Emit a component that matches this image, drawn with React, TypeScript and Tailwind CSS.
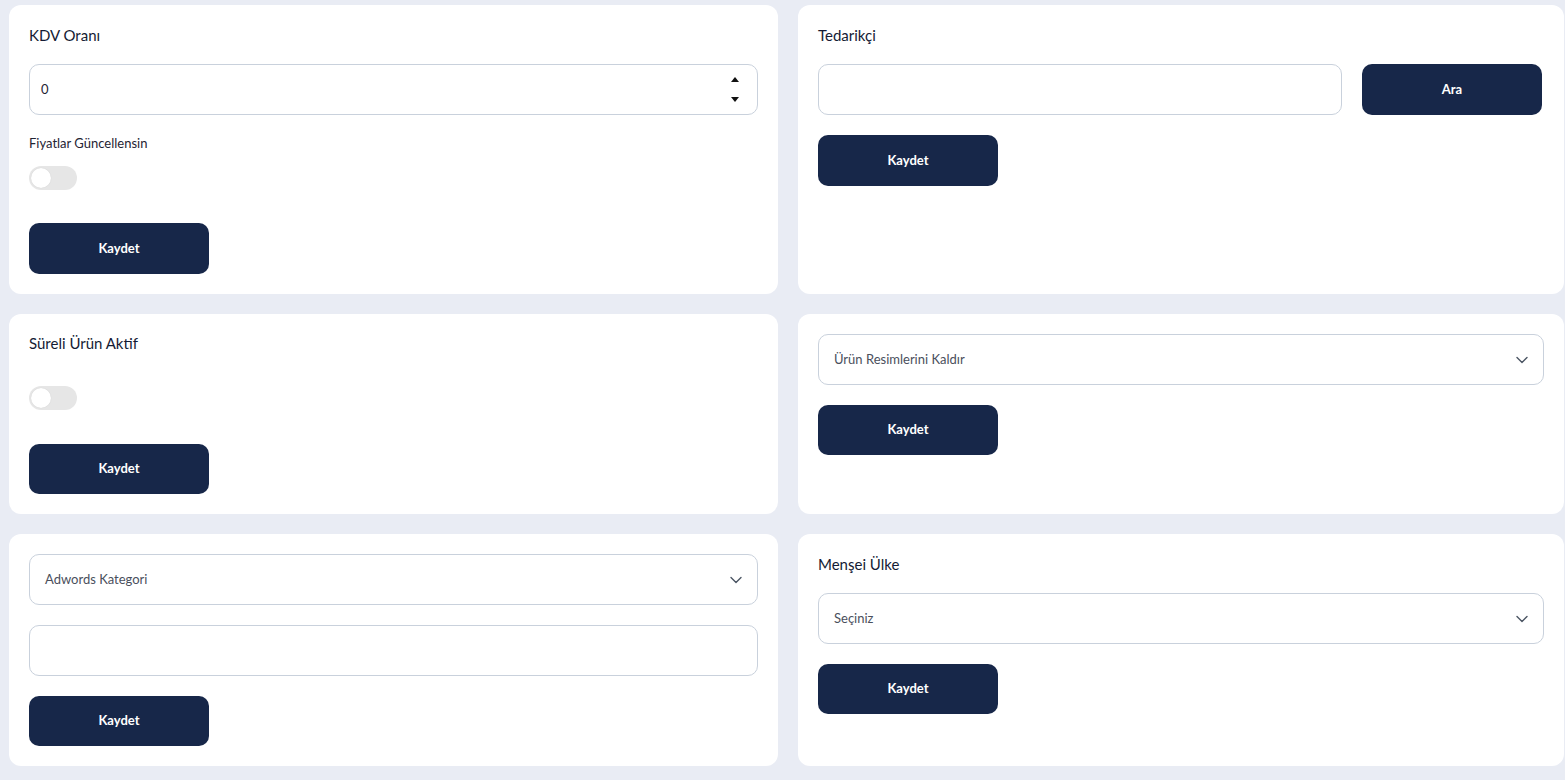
import React from "react";

const font = { fontFamily: "Lato, 'Noto Sans', sans-serif" };

function Card({ children }: { children: React.ReactNode }) {
  return <div className="bg-white rounded-[12px] px-[20px] pt-[20px] pb-[20px]">{children}</div>;
}

function Title({ children }: { children: React.ReactNode }) {
  return <div className="h-[20px] leading-[20px] text-[15px] text-[#141b34] mb-[19px]">{children}</div>;
}

function Button({ label, className = "" }: { label: string; className?: string }) {
  return (
    <button className={"w-[180px] rounded-[10px] bg-[#172749] text-white text-[13px] font-bold flex items-center justify-center " + className}>
      {label}
    </button>
  );
}

function Toggle({ className = "" }: { className?: string }) {
  return (
    <div className={"w-[48px] h-[24px] rounded-full bg-[#e6e6e6] relative " + className}>
      <div className="absolute left-[2px] top-[2px] w-[20px] h-[20px] rounded-full bg-white shadow-[0_0_1px_rgba(0,0,0,0.15)]" />
    </div>
  );
}

function Chevron() {
  return (
    <svg width="12" height="8" viewBox="0 0 12 8" fill="none">
      <path d="M1 1.5 L6 6.5 L11 1.5" stroke="#4b5563" strokeWidth="1.4" strokeLinecap="round" strokeLinejoin="round" />
    </svg>
  );
}

function Select({ label, className = "" }: { label: string; className?: string }) {
  return (
    <div className={"h-[51px] rounded-[10px] border border-[#c9d1dc] flex items-center justify-between pl-[15px] pr-[15px] " + className}>
      <span className="text-[13px] text-[#4a4f5c]">{label}</span>
      <Chevron />
    </div>
  );
}

function Input({ className = "", children }: { className?: string; children?: React.ReactNode }) {
  return (
    <div className={"h-[51px] rounded-[10px] border border-[#c9d1dc] flex items-center px-[11px] relative " + className}>
      {children}
    </div>
  );
}

export default function App() {
  return (
    <div className="w-[1565px] h-[780px] bg-[#e9ecf4] pl-[9px] pt-[5px] overflow-hidden" style={font}>
      <div className="grid grid-cols-[769px_766px] gap-x-[20px] gap-y-[20px]">
        {/* Row 1 left */}
        <Card>
          <Title>KDV Oranı</Title>
          <Input>
            <span className="text-[13px] text-[#1f2433]">0</span>
            <div className="absolute right-[18px] top-[12px] flex flex-col gap-[15px]">
              <svg width="8" height="5" viewBox="0 0 8 5"><path d="M0 5 L4 0 L8 5 Z" fill="#111" /></svg>
              <svg width="8" height="5" viewBox="0 0 8 5"><path d="M0 0 L4 5 L8 0 Z" fill="#111" /></svg>
            </div>
          </Input>
          <div className="mt-[20px] h-[16px] leading-[16px] text-[13px] text-[#1f2433]">Fiyatlar Güncellensin</div>
          <Toggle className="mt-[15px]" />
          <Button label="Kaydet" className="h-[51px] mt-[33px]" />
        </Card>
        {/* Row 1 right */}
        <Card>
          <Title>Tedarikçi</Title>
          <div className="flex gap-[20px] pr-[2px]">
            <Input className="flex-1" />
            <Button label="Ara" className="h-[51px]" />
          </div>
          <Button label="Kaydet" className="h-[51px] mt-[20px]" />
        </Card>
        {/* Row 2 left */}
        <Card>
          <div className="h-[20px] leading-[20px] text-[15px] text-[#141b34] mt-[-1px]">Süreli Ürün Aktif</div>
          <Toggle className="mt-[33px]" />
          <Button label="Kaydet" className="h-[50px] mt-[34px]" />
        </Card>
        {/* Row 2 right */}
        <Card>
          <Select label="Ürün Resimlerini Kaldır" />
          <Button label="Kaydet" className="h-[50px] mt-[20px]" />
        </Card>
        {/* Row 3 left */}
        <Card>
          <Select label="Adwords Kategori" />
          <Input className="mt-[20px]" />
          <Button label="Kaydet" className="h-[50px] mt-[20px]" />
        </Card>
        {/* Row 3 right */}
        <Card>
          <Title>Menşei Ülke</Title>
          <Select label="Seçiniz" />
          <Button label="Kaydet" className="h-[50px] mt-[20px]" />
        </Card>
      </div>
    </div>
  );
}
